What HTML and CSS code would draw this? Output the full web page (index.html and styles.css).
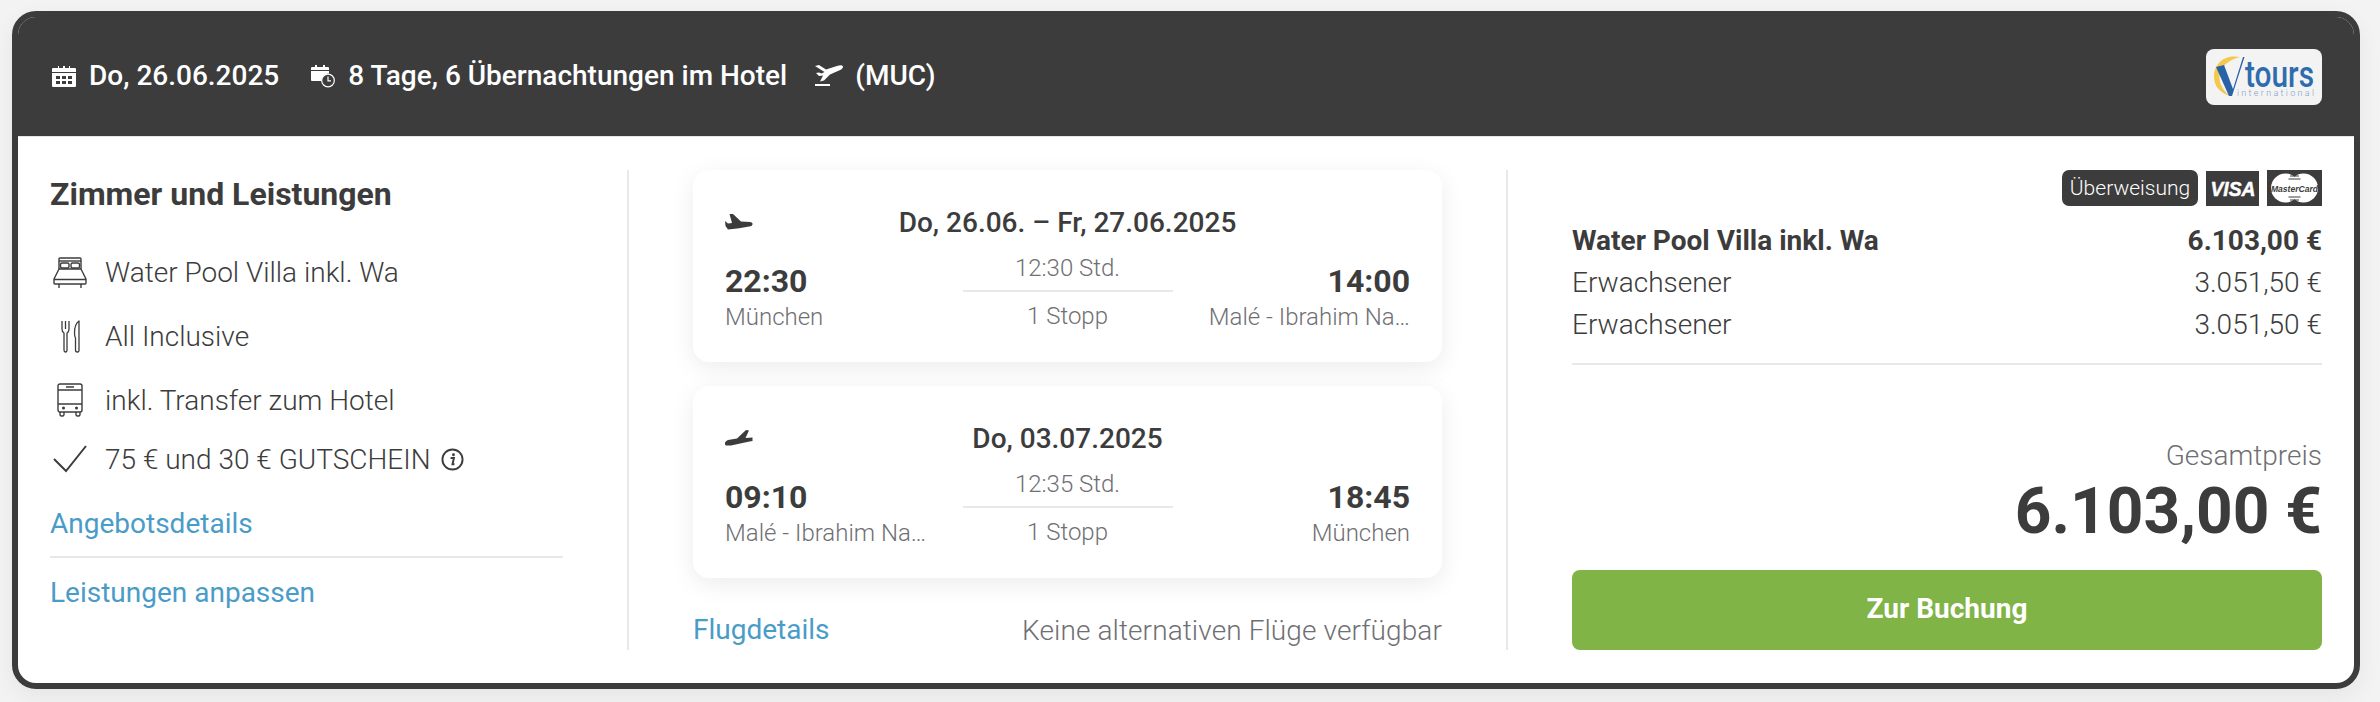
FILE: index.html
```html
<!DOCTYPE html>
<html lang="de">
<head>
<meta charset="utf-8">
<title>Angebot</title>
<link rel="stylesheet" href="styles.css">
</head>
<body>
<article class="offer">
  <header class="head">
    <div class="head-items">
      <span class="head-item">
        <svg class="ic-cal" viewBox="0 0 24 22"><path fill="#fff" fill-rule="evenodd" d="M1 3h5V1h1v2h4V1h2v2h4V1h1v2h5a1 1 0 0 1 1 1v3H0V4a1 1 0 0 1 1-1zM0 8h24v13a1 1 0 0 1-1 1H1a1 1 0 0 1-1-1zm4 3v3h4v-3zm6 0v3h4v-3zm6 0v3h4v-3zM4 16v3h4v-3zm6 0v3h4v-3zm6 0v3h4v-3z"/></svg>
        Do, 26.06.2025
      </span>
      <span class="head-item">
        <svg class="ic-calclock" viewBox="0 0 24 24"><path fill="#fff" d="M1 3h3V1h2v2h6V1h2v2h3a1 1 0 0 1 1 1v2H0V4a1 1 0 0 1 1-1zM0 7h18v2.500A7 7 0 0 0 10.600 17H1a1 1 0 0 1-1-1z"/><circle cx="17" cy="16.500" r="6.300" fill="none" stroke="#fff" stroke-width="1.200"/><path d="M17 12.500v4.300h3" fill="none" stroke="#fff" stroke-width="1.200"/></svg>
        8 Tage, 6 Übernachtungen im Hotel
      </span>
      <span class="head-item item-depart">
        <svg class="ic-depart" viewBox="0 0 28 21"><path fill="#fff" d="M0 1l4-1 7 4.500L22 1q5-1.500 6 .5 0 2.500-4 4l-9 4-6 6-4 1 3-6-4 .5-3-3 3-.5 2.500 1 3-1.500z"/><rect x="0" y="19" width="15" height="2" fill="#fff"/></svg>
        (MUC)
      </span>
    </div>
    <div class="brand">
      <svg class="brand-art" viewBox="0 0 116 56">
        <path d="M34 8C20 5 8 13 8 28c0 9 6 16 16 19C17 41 13 35 13.500 27 14 17 23 11 34 8z" fill="#f2c94c"/>
        <path d="M10 18l8-2 9 24L37 8l1.500 0L26 47h-3z" fill="#2a62a8"/>
        <text class="brand-word" transform="translate(39 38) scale(1 1.2)" textLength="69" lengthAdjust="spacingAndGlyphs">tours</text>
        <text x="31" y="47" class="brand-sub" textLength="77">international</text>
      </svg>
    </div>
  </header>
  <div class="body">
    <section class="col-services">
      <h2 class="services-title">Zimmer und Leistungen</h2>
      <ul class="services">
        <li class="service">
          <span class="service-icon"><svg class="ic-bed" viewBox="0 0 34 31" fill="none" stroke="#3c3c3c" stroke-width="1.400" stroke-linejoin="round"><path d="M6 12V2q0-1 1-1h20q1 0 1 1v10"/><path d="M6 4h22"/><rect x="7.500" y="6" width="8.500" height="5" rx="1.500"/><rect x="18" y="6" width="8.500" height="5" rx="1.500"/><path d="M6 12h22l5 10v4q0 1-1 1H2q-1 0-1-1v-4zM1 22.500h32M6 27v4M28 27v4"/></svg></span>
          <span>Water Pool Villa inkl. Wa</span>
        </li>
        <li class="service">
          <span class="service-icon"><svg class="ic-cut" viewBox="0 0 19 33" fill="none" stroke="#3c3c3c" stroke-width="1.300" stroke-linejoin="round"><path d="M1 1v8q0 3 2 4v17q0 2 1.500 2T6 30V13q2-1 2-4V1M4.500 1v8"/><path d="M18 1q-4.500 3-4.500 12 0 3 1 5v12q0 2 1.800 2t1.700-2z"/></svg></span>
          <span>All Inclusive</span>
        </li>
        <li class="service">
          <span class="service-icon"><svg class="ic-bus" viewBox="0 0 26 34" fill="none" stroke="#3c3c3c" stroke-width="1.400" stroke-linejoin="round"><rect x="1" y="1" width="24" height="28" rx="2"/><path d="M1 7h24M1 21h24M9 4h8"/><circle cx="6.500" cy="25" r=".8" fill="#3c3c3c"/><circle cx="19.500" cy="25" r=".8" fill="#3c3c3c"/><path d="M3 29v2.500q0 1.500 1.500 1.500h1q1.500 0 1.500-1.500V29M19 29v2.500q0 1.500 1.500 1.500h1q1.500 0 1.500-1.500V29"/></svg></span>
          <span>inkl. Transfer zum Hotel</span>
        </li>
        <li class="service service-check">
          <span class="service-icon"><svg class="ic-check" viewBox="0 0 34 28" fill="none" stroke="#3c3c3c" stroke-width="2"><path d="M1 14l12 12L33 1"/></svg></span>
          <span>75 € und 30 € GUTSCHEIN</span>
          <svg class="ic-info" viewBox="0 0 24 24"><circle cx="12" cy="12" r="10.500" fill="none" stroke="#3c3c3c" stroke-width="2"/><circle cx="13" cy="7" r="1.500" fill="#3c3c3c"/><path d="M10 10.500h3.500l-1.500 6.500h2" fill="none" stroke="#3c3c3c" stroke-width="2"/></svg>
        </li>
      </ul>
      <a class="link link-details">Angebotsdetails</a>
      <a class="link link-adjust">Leistungen anpassen</a>
    </section>

    <section class="col-flights">
      <div class="flight">
        <div class="flight-top">
          <svg class="ic-plane" viewBox="0 0 28 16"><path fill="#3c3c3c" d="M4.500 0H8l8 7.500 9 .5q3 .5 2.500 2.500-.5 1.500-2 1.700Q14 14.500 3 15.500L.5 12 0 7l3 2.500 4-.5z"/></svg>
          <span class="flight-date">Do, 26.06. – Fr, 27.06.2025</span>
        </div>
        <div class="flight-grid">
          <div class="ep"><strong class="time">22:30</strong><span class="place">München</span></div>
          <div class="mid"><span class="dur">12:30 Std.</span><span class="stops">1 Stopp</span></div>
          <div class="ep ep-end"><strong class="time">14:00</strong><span class="place">Malé - Ibrahim Na…</span></div>
        </div>
      </div>
      <div class="flight">
        <div class="flight-top">
          <svg class="ic-plane" viewBox="0 0 28 16"><path fill="#3c3c3c" d="M0 12.500q1-2 3-2.500l9-1.500L21 0l3 .5-3.500 7.500 7-.5V11l-3 .5L6 15.500H1.500q-2 0-1.500-3z"/></svg>
          <span class="flight-date">Do, 03.07.2025</span>
        </div>
        <div class="flight-grid">
          <div class="ep"><strong class="time">09:10</strong><span class="place">Malé - Ibrahim Na…</span></div>
          <div class="mid"><span class="dur">12:35 Std.</span><span class="stops">1 Stopp</span></div>
          <div class="ep ep-end"><strong class="time">18:45</strong><span class="place">München</span></div>
        </div>
      </div>
      <div class="flight-foot">
        <a class="link">Flugdetails</a>
        <span class="no-alt">Keine alternativen Flüge verfügbar</span>
      </div>
    </section>

    <section class="col-price">
      <div class="pay">
        <span class="pay-text">Überweisung</span>
        <svg class="pay-visa" viewBox="0 0 53 35"><rect width="53" height="35" fill="#3c3c3c"/><text x="27" y="25" class="visa-text" textLength="45" lengthAdjust="spacingAndGlyphs">VISA</text></svg>
        <svg class="pay-mc" viewBox="0 0 55 36"><rect width="55" height="36" fill="#3c3c3c"/><circle cx="18.500" cy="18" r="14.500" fill="#fff"/><circle cx="36.500" cy="18" r="14.500" fill="#fff"/><path d="M23 6h9M21.500 9h12M21.500 27h12M23 30h9" stroke="#3c3c3c" stroke-width="1"/><text x="27.500" y="21.500" class="mc-text" textLength="47" lengthAdjust="spacingAndGlyphs">MasterCard</text></svg>
      </div>
      <div class="line line-bold"><span>Water Pool Villa inkl. Wa</span><span>6.103,00 €</span></div>
      <div class="line"><span>Erwachsener</span><span>3.051,50 €</span></div>
      <div class="line line-last"><span>Erwachsener</span><span>3.051,50 €</span></div>
      <div class="total">
        <span class="total-label">Gesamtpreis</span>
        <span class="total-value">6.103,00 €</span>
      </div>
      <button class="book" type="button">Zur Buchung</button>
    </section>
  </div>
</article>
</body>
</html>
```
FILE: styles.css
```css
* { box-sizing: border-box; }
html, body { margin: 0; }
body {
  width: 2380px;
  height: 702px;
  padding: 11px 20px 13px 12px;
  background: #f3f3f3;
  font-family: Roboto, "Liberation Sans", sans-serif;
  color: #3c3c3c;
  overflow: hidden;
}
.offer {
  height: 678px;
  border: 6px solid #3c3c3c;
  border-radius: 24px;
  background: #fff;
  display: flex;
  flex-direction: column;
  overflow: hidden;
  box-shadow: 0 8px 24px rgba(0,0,0,.06);
}
.head {
  height: 120px;
  flex: none;
  background: #3c3c3c;
  border-bottom: 1px solid #e6e6e6;
  display: flex;
  align-items: center;
  justify-content: space-between;
  padding: 0 32px 0 34px;
  color: #fff;
}
.head-items { display: flex; align-items: center; gap: 32px; font-size: 28px; font-weight: 500; padding-bottom: 2px; }
.head-item { display: flex; align-items: center; gap: 13px; white-space: nowrap; }
.item-depart { margin-left: -4px; gap: 12px; }
.ic-cal { width: 24px; height: 22px; }
.ic-calclock { width: 24px; height: 24px; }
.ic-depart { width: 28px; height: 21px; }
.brand {
  width: 116px;
  height: 56px;
  border-radius: 8px;
  background: #f3f3f3;
}
.brand-art { display: block; width: 116px; height: 56px; }
.brand-word { font-family: Roboto, sans-serif; font-weight: 500; font-size: 30px; fill: #2f6cae; }
.brand-sub { font-family: Roboto, sans-serif; font-weight: 300; font-size: 9px; fill: #7f9fc6; }
.body { flex: 1; display: flex; padding: 33px 0 33px; min-height: 0; }
.col-services { width: 611px; flex: none; padding: 5px 64px 0 32px; border-right: 2px solid #e8e8e8; }
.services-title { margin: 0 0 27px; font-size: 32px; line-height: 38px; font-weight: 700; }
.services { list-style: none; margin: 0; padding: 0; }
.service { display: flex; align-items: center; height: 64px; font-size: 28px; font-weight: 350; }
.service-check { height: 54px; }
.service-icon { width: 55px; flex: none; display: flex; justify-content: center; padding-right: 15px; }
.ic-bed { width: 34px; height: 31px; }
.ic-cut { width: 19px; height: 33px; }
.ic-bus { width: 26px; height: 34px; }
.ic-check { width: 34px; height: 28px; }
.ic-info { width: 23px; height: 23px; margin-left: 10px; }
.link { color: #4a9cc8; font-size: 28px; font-weight: 400; line-height: 36px; }
.link-details { display: block; margin-top: 20px; padding-bottom: 14px; border-bottom: 2px solid #e8e8e8; }
.link-adjust { display: block; margin-top: 17px; }
.col-flights { width: 879px; flex: none; padding: 0 64px; border-right: 2px solid #e8e8e8; display: flex; flex-direction: column; }
.flight {
  height: 192px;
  flex: none;
  border-radius: 16px;
  background: #fff;
  box-shadow: 0 6px 24px rgba(0,0,0,.08);
  padding: 33px 32px 0;
  margin-bottom: 24px;
}
.flight-top { position: relative; display: flex; justify-content: center; height: 38px; align-items: center; }
.flight-date { font-size: 28px; font-weight: 500; }
.ic-plane { position: absolute; left: 0; top: 11px; width: 28px; height: 16px; }
.flight-grid { display: grid; grid-template-columns: 1fr 210px 1fr; column-gap: 32px; margin-top: 10px; }
.ep { display: flex; flex-direction: column; min-width: 0; padding-top: 11px; }
.ep-end { text-align: right; }
.time { font-size: 32px; line-height: 38px; font-weight: 700; }
.place { font-size: 24px; line-height: 32px; font-weight: 350; color: #6f6f73; white-space: nowrap; margin-top: 1px; }
.mid { display: flex; flex-direction: column; align-items: center; font-size: 24px; font-weight: 350; color: #6f6f73; }
.dur { width: 100%; text-align: center; line-height: 34px; padding-bottom: 5px; border-bottom: 2px solid #e8e8e8; }
.stops { line-height: 32px; margin-top: 8px; }
.flight-foot { display: flex; justify-content: space-between; align-items: center; height: 36px; margin-top: 10px; }
.no-alt { font-size: 28px; font-weight: 350; color: #6f6f73; letter-spacing: .1px; }
.col-price { flex: 1; padding: 0 32px 0 64px; display: flex; flex-direction: column; min-width: 0; }
.pay { display: flex; justify-content: flex-end; align-items: center; gap: 8px; height: 36px; margin-bottom: 14px; }
.pay-text { height: 36px; width: 136px; background: #3c3c3c; color: #fff; border-radius: 7px; font-size: 21px; font-weight: 350; line-height: 36px; text-align: center; }
.pay-visa { width: 53px; height: 35px; }
.pay-mc { width: 55px; height: 36px; }
.visa-text { font-family: "Liberation Sans", sans-serif; font-weight: 700; font-style: italic; font-size: 21px; fill: #fff; stroke: #fff; stroke-width: .5px; text-anchor: middle; }
.mc-text { font-family: "Liberation Sans", sans-serif; font-style: italic; font-weight: 700; font-size: 8.500px; fill: #3c3c3c; text-anchor: middle; }
.line { display: flex; justify-content: space-between; font-size: 28px; line-height: 42px; font-weight: 350; }
.line-bold { font-weight: 700; }
.line-last { padding-bottom: 19px; border-bottom: 2px solid #e8e8e8; height: 61px; }
.total { flex: 1; display: flex; flex-direction: column; align-items: flex-end; justify-content: flex-end; padding-bottom: 19px; }
.total-label { font-size: 28px; line-height: 34px; font-weight: 350; color: #6f6f73; }
.total-value { font-size: 64px; line-height: 78px; font-weight: 700; }
.book { height: 80px; flex: none; border: 0; border-radius: 8px; background: #80b446; color: #fff; font-family: inherit; font-size: 28px; font-weight: 700; padding: 0 0 3px; }
```
